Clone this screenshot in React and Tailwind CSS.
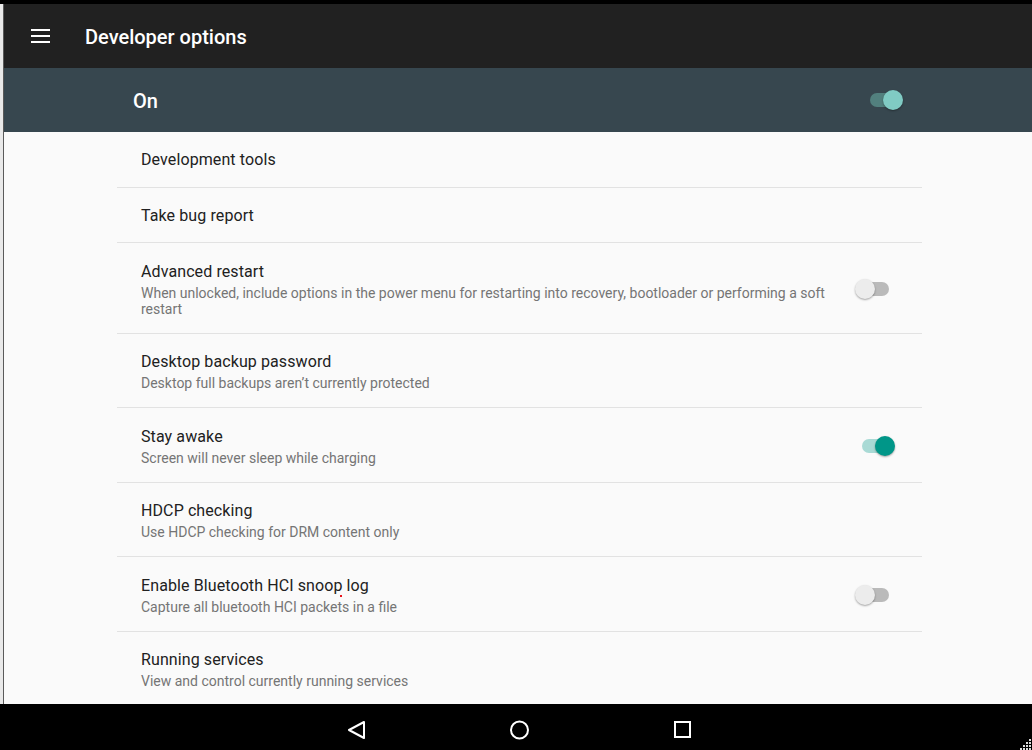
import React from "react";

function Switch({ on, variant = "light" }) {
  const trackCls =
    variant === "dark"
      ? "bg-[#52807e]"
      : on
      ? "bg-[#a9dad5]"
      : "bg-[#bababa]";
  const thumbCls =
    variant === "dark"
      ? "bg-[#80cbc4]"
      : on
      ? "bg-[#009688]"
      : "bg-[#ececec]";
  return (
    <div className="relative w-[40px] h-[20px] shrink-0">
      <div className={`absolute left-[7px] top-[3px] w-[27px] h-[14px] rounded-full ${trackCls}`} />
      <div
        className={`absolute top-0 w-[20px] h-[20px] rounded-full shadow-[0_1px_2px_rgba(0,0,0,0.35)] ${thumbCls} ${
          on ? "left-[20px]" : "left-0"
        }`}
      />
    </div>
  );
}

function Row({ title, summary, h, toggle, last, children }) {
  return (
    <div
      className={`relative flex items-center pl-[24px] pr-[27px] pt-[1px] ${h} ${
        last ? "" : "border-b border-[#e2e2e2]"
      }`}
    >
      <div className="flex-1 min-w-0 pr-[16px]">
        <div className="text-[16px] leading-[22px] text-[#212121] tracking-[0.1px]">{title}</div>
        {summary && (
          <div className="mt-[2px] text-[14px] leading-[16px] text-[#757575]">{summary}</div>
        )}
      </div>
      {toggle !== undefined && <Switch on={toggle} />}
      {children}
    </div>
  );
}

export default function App() {
  return (
    <div className="w-[1032px] h-[750px] flex flex-col bg-black overflow-hidden font-['Roboto','Liberation_Sans',sans-serif]">
      <div className="h-[4px] bg-black shrink-0" />
      <div className="flex flex-1 min-h-0">
        <div className="w-[4px] shrink-0 bg-[#e9e9e9] border-r border-[#5a5a5a]" />
        <div className="flex-1 flex flex-col min-w-0">
          {/* toolbar */}
          <div className="h-[64px] shrink-0 bg-[#212121] flex items-center">
            <div className="ml-[27px] w-[19px] flex flex-col gap-[4px]">
              <div className="h-[2px] bg-white" />
              <div className="h-[2px] bg-white" />
              <div className="h-[2px] bg-white" />
            </div>
            <div className="ml-[35px] pt-[2px] text-[20px] font-medium text-white">
              Developer options
            </div>
          </div>
          {/* master switch bar */}
          <div className="h-[64px] shrink-0 bg-[#37474f] flex items-center pl-[129px] pr-[129px]">
            <div className="flex-1 pt-[2px] text-[20px] font-medium text-white">On</div>
            <Switch on variant="dark" />
          </div>
          {/* list */}
          <div className="flex-1 min-h-0 bg-[#fafafa] overflow-hidden">
            <div className="ml-[113px] w-[805px]">
              <Row title="Development tools" h="h-[56px]" />
              <Row title="Take bug report" h="h-[55px]" />
              <Row
                title="Advanced restart"
                summary="When unlocked, include options in the power menu for restarting into recovery, bootloader or performing a soft restart"
                h="h-[91px]"
                toggle={false}
              />
              <Row
                title="Desktop backup password"
                summary="Desktop full backups aren’t currently protected"
                h="h-[74px]"
              />
              <Row
                title="Stay awake"
                summary="Screen will never sleep while charging"
                h="h-[75px]"
                toggle={true}
              />
              <Row
                title="HDCP checking"
                summary="Use HDCP checking for DRM content only"
                h="h-[74px]"
              />
              <Row
                title="Enable Bluetooth HCI snoop log"
                summary="Capture all bluetooth HCI packets in a file"
                h="h-[75px]"
                toggle={false}
              >
                <div className="absolute left-[223px] top-[38px] w-[2px] h-[2px] bg-[#e8141c]" />
              </Row>
              <Row
                title="Running services"
                summary="View and control currently running services"
                h="h-[72px]"
                last
              />
            </div>
          </div>
        </div>
      </div>
      {/* nav bar */}
      <div className="relative h-[46px] shrink-0 bg-black flex items-center">
        <svg className="absolute left-[347px] top-[16px]" width="20" height="20" viewBox="0 0 20 20">
          <path d="M17 2 L2 10 L17 18 Z" fill="none" stroke="white" strokeWidth="2" strokeLinejoin="round" />
        </svg>
        <svg className="absolute left-[509px] top-[16px]" width="21" height="21" viewBox="0 0 21 21">
          <circle cx="10.5" cy="10" r="8.5" fill="none" stroke="white" strokeWidth="2" />
        </svg>
        <svg className="absolute left-[673px] top-[17px]" width="20" height="18" viewBox="0 0 20 18">
          <rect x="2" y="1" width="15" height="15" fill="none" stroke="white" strokeWidth="2" />
        </svg>
        <svg className="absolute right-0 bottom-0" width="14" height="14" viewBox="0 0 14 14">
          <g fill="#dcdcdc">
            <rect x="11" y="3" width="2" height="2" />
            <rect x="8" y="6" width="2" height="2" />
            <rect x="11" y="6" width="2" height="2" />
            <rect x="5" y="9" width="2" height="2" />
            <rect x="8" y="9" width="2" height="2" />
            <rect x="11" y="9" width="2" height="2" />
            <rect x="2" y="12" width="2" height="2" />
            <rect x="5" y="12" width="2" height="2" />
            <rect x="8" y="12" width="2" height="2" />
            <rect x="11" y="12" width="2" height="2" />
          </g>
        </svg>
      </div>
    </div>
  );
}
